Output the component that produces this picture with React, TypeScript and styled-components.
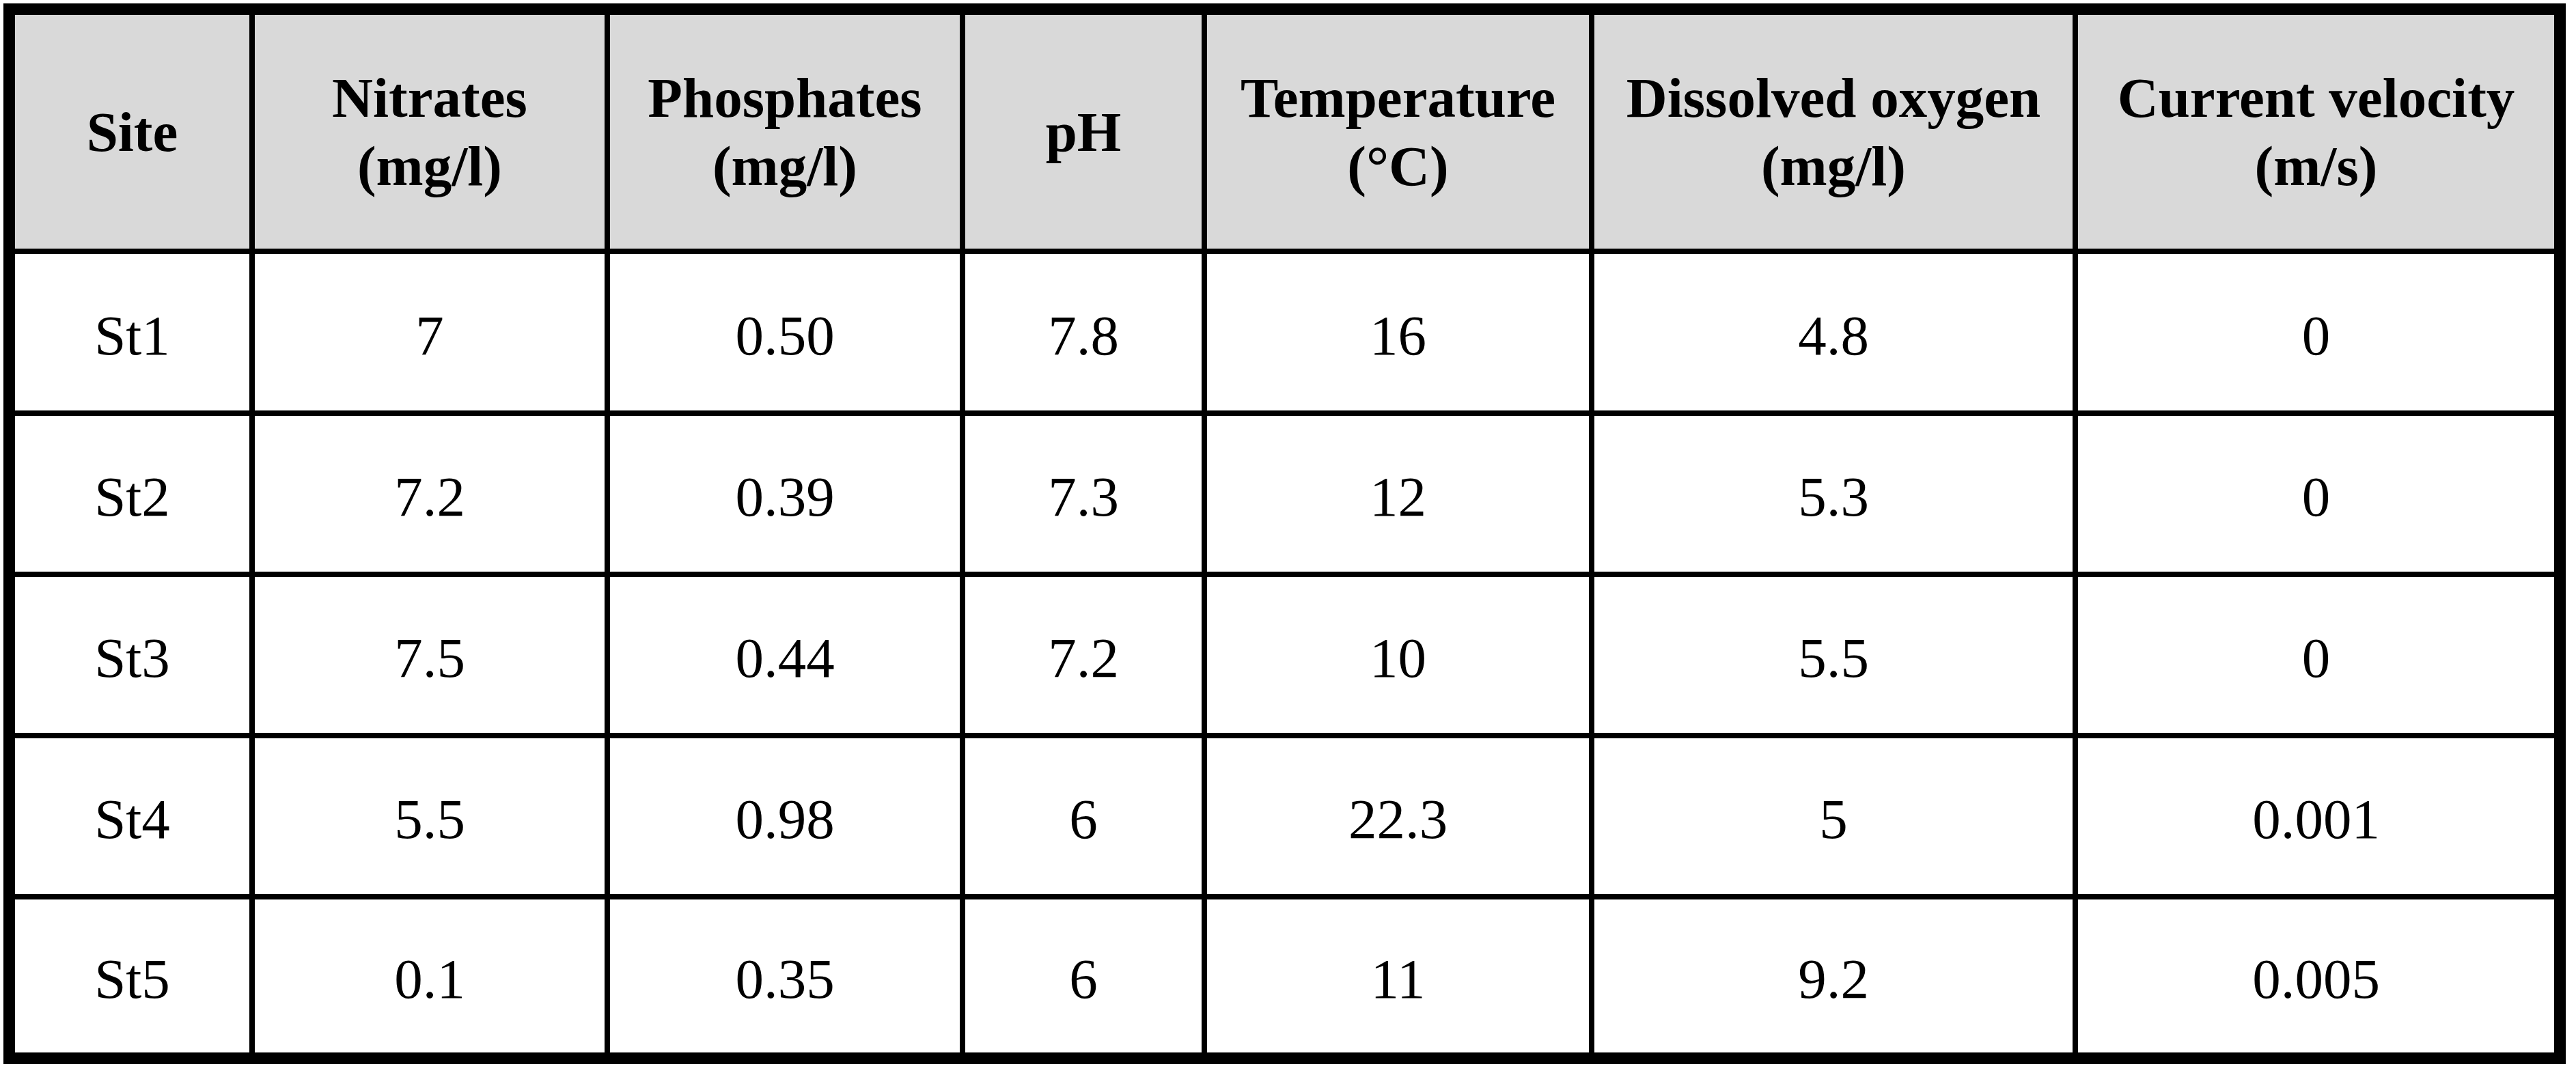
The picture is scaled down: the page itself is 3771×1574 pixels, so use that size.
import React from "react";
import styled, { createGlobalStyle } from "styled-components";

const GlobalStyle = createGlobalStyle`
  html, body {
    margin: 0;
    padding: 0;
    background: #ffffff;
  }
  body {
    font-family: "Liberation Serif", "Times New Roman", serif;
    color: #000000;
  }
`;

const Page = styled.div`
  padding: 5px 0 0 5px;
`;

const Frame = styled.div`
  width: max-content;
  border: 17px solid #000000;
`;

const Grid = styled.div`
  display: grid;
  grid-template-columns: 343px 512px 512px 346px 559px 700px 697px;
  grid-template-rows: 342px 229px 228px 228px 228px 224px;
  gap: 8px;
  background: #000000;
`;

const HeadCell = styled.div`
  display: flex;
  align-items: center;
  justify-content: center;
  text-align: center;
  background: #d9d9d9;
  font-weight: 700;
  font-size: 83px;
  line-height: 100px;
  white-space: nowrap;
`;

const Cell = styled.div`
  display: flex;
  align-items: center;
  justify-content: center;
  box-sizing: border-box;
  padding-top: 8px;
  background: #ffffff;
  font-size: 83px;
  white-space: nowrap;
`;

const headers: string[][] = [
  ["Site"],
  ["Nitrates", "(mg/l)"],
  ["Phosphates", "(mg/l)"],
  ["pH"],
  ["Temperature", "(°C)"],
  ["Dissolved oxygen", "(mg/l)"],
  ["Current velocity", "(m/s)"],
];

const rows: string[][] = [
  ["St1", "7", "0.50", "7.8", "16", "4.8", "0"],
  ["St2", "7.2", "0.39", "7.3", "12", "5.3", "0"],
  ["St3", "7.5", "0.44", "7.2", "10", "5.5", "0"],
  ["St4", "5.5", "0.98", "6", "22.3", "5", "0.001"],
  ["St5", "0.1", "0.35", "6", "11", "9.2", "0.005"],
];

export default function App() {
  return (
    <>
      <GlobalStyle />
      <Page>
        <Frame>
          <Grid>
            {headers.map((lines, i) => (
              <HeadCell key={"h" + i}>
                <div>
                  {lines.map((l, j) => (
                    <div key={j}>{l}</div>
                  ))}
                </div>
              </HeadCell>
            ))}
            {rows.map((row, r) =>
              row.map((value, c) => <Cell key={r + "-" + c}>{value}</Cell>)
            )}
          </Grid>
        </Frame>
      </Page>
    </>
  );
}
